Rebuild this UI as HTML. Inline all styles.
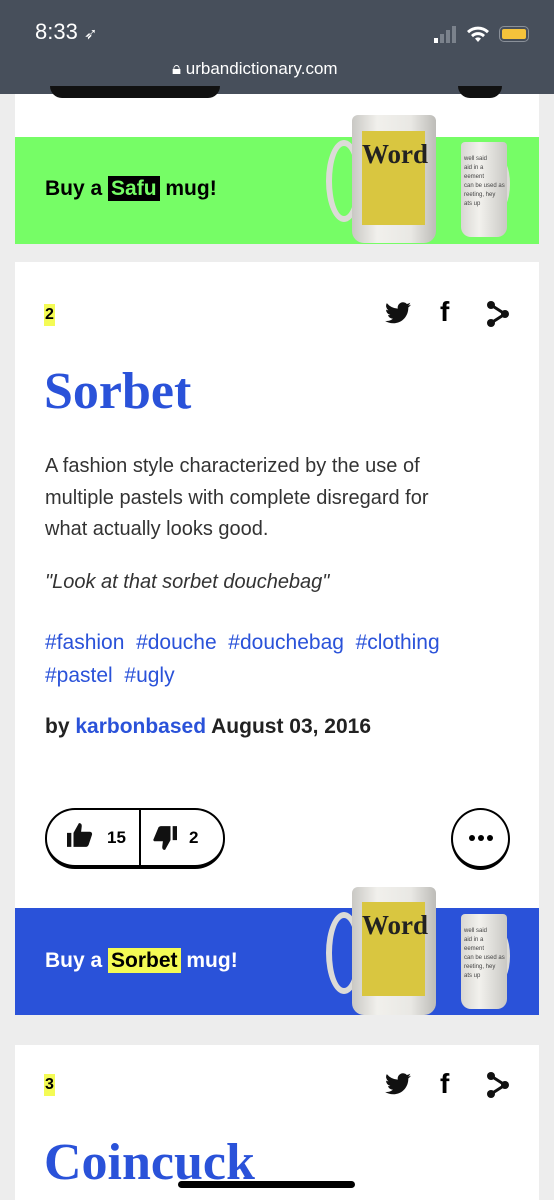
<!DOCTYPE html>
<html><head><meta charset="utf-8"><style>
*{margin:0;padding:0;box-sizing:border-box}
body{width:554px;height:1200px;overflow:hidden;background:#ededed;font-family:"Liberation Sans",sans-serif;position:relative}
.abs{position:absolute}
.bar{left:0;top:0;width:554px;height:94px;background:#474f5b;color:#fff}
.card{background:#fff;left:15px;width:524px}
.ad{left:15px;width:524px;height:107px}
.buy{font-weight:bold;font-size:21px;left:45px}
.hl{padding:1px 3px}
.mug{width:84px;height:128px;background:linear-gradient(90deg,#c9c8c4,#f1f0ec 30%,#e9e8e4 70%,#bdbcb8);border-radius:6px 6px 12px 12px}
.mug2{width:46px;height:95px;background:linear-gradient(90deg,#d8d7d3,#f2f1ed 40%,#c9c8c4);border-radius:4px 4px 10px 10px}
.handle{border:6px solid #dcdbd7;border-radius:50%}
.yel{background:#d9c640;font-family:"Liberation Serif",serif;font-weight:bold;font-size:27px;color:#222;padding-top:8px;text-align:center}
.small{font-size:6px;color:#444;line-height:9px}
.blue{color:#2a52d9}
.txt{color:#333;font-size:20px;left:45px}
.ic{fill:#111}
.dots{display:flex;align-items:center;justify-content:center;gap:3px}
.dots i{width:6px;height:6px;border-radius:50%;background:#000;display:block}
</style></head><body>
<div class="abs bar">
 <div class="abs" style="left:35px;top:19px;font-size:22px">8:33 <span style="font-size:16px">➶</span></div>
 <div class="abs" style="left:434px;top:38px;width:4px;height:5px;background:#fff"></div>
 <div class="abs" style="left:440px;top:34px;width:4px;height:9px;background:#7b828c"></div>
 <div class="abs" style="left:446px;top:30px;width:4px;height:13px;background:#7b828c"></div>
 <div class="abs" style="left:452px;top:26px;width:4px;height:17px;background:#7b828c"></div>
 <svg class="abs" style="left:466px;top:25px" width="24" height="18" viewBox="0 0 24 18"><path d="M12 17l3-3.5a5 5 0 0 0-6 0z M5 10a10 10 0 0 1 14 0l-2 2.2a7 7 0 0 0-10 0z M1 6a16 16 0 0 1 22 0l-2 2.2a13 13 0 0 0-18 0z" fill="#fff"/></svg>
 <div class="abs" style="left:499px;top:26px;width:30px;height:16px;border:1.5px solid #8a9099;border-radius:5px;padding:2px"><div style="width:100%;height:100%;background:#f5c33b;border-radius:2px"></div></div>
 <div class="abs" style="left:172px;top:59px;font-size:17px">🔒︎ urbandictionary.com</div>
</div>
<div class="abs card" style="top:94px;height:149px"></div>
<div class="abs" style="left:50px;top:86px;width:170px;height:12px;background:#111;border-radius:0 0 14px 14px"></div>
<div class="abs" style="left:458px;top:86px;width:44px;height:12px;background:#111;border-radius:0 0 14px 14px"></div>
<div class="abs ad" style="top:137px;background:#76fd66"></div>
<div class="abs buy" style="top:177px;color:#000">Buy a <span class="hl" style="background:#000;color:#76fd66">Safu</span> mug!</div>
<div class="abs handle" style="left:484px;top:155px;width:26px;height:58px"></div>
<div class="abs mug2" style="left:461px;top:142px"></div>
<div class="abs small" style="left:464px;top:155px">well said<br>aid in a<br>eement<br>can be used as<br>reeting, hey<br>ats up</div>
<div class="abs handle" style="left:326px;top:140px;width:36px;height:82px"></div>
<div class="abs mug" style="left:352px;top:115px"></div>
<div class="abs yel" style="left:362px;top:131px;width:63px;height:94px">Word</div>
<div class="abs card" style="top:262px;height:753px"></div>
<div class="abs" style="left:44px;top:304px;background:#f4fb55;font-weight:bold;font-size:16px;padding:2px 1px">2</div>
<svg class="abs" style="left:385px;top:302px" width="26" height="22" viewBox="0 0 24 20"><path class="ic" d="M24 2.4a9.8 9.8 0 0 1-2.8.8A4.9 4.9 0 0 0 23.3.5a9.9 9.9 0 0 1-3.1 1.2A4.9 4.9 0 0 0 11.8 6 14 14 0 0 1 1.7.9a4.9 4.9 0 0 0 1.5 6.6 4.9 4.9 0 0 1-2.2-.6 4.9 4.9 0 0 0 3.9 4.9 4.9 4.9 0 0 1-2.2.1 4.9 4.9 0 0 0 4.6 3.4A9.9 9.9 0 0 1 0 17.3 14 14 0 0 0 7.5 19.5c9.1 0 14-7.5 14-14v-.6A10 10 0 0 0 24 2.4z"/></svg>
<div class="abs" style="left:440px;top:296px;font-size:28px;font-weight:bold">f</div>
<svg class="abs" style="left:486px;top:301px" width="24" height="26" viewBox="0 0 24 26"><path d="M5 4l14 9L5 22" stroke="#111" stroke-width="3" fill="none"/><circle cx="5" cy="4" r="4" class="ic"/><circle cx="19" cy="13" r="4" class="ic"/><circle cx="5" cy="22" r="4" class="ic"/></svg>
<div class="abs blue" style="left:44px;top:362px;font-family:'Liberation Serif',serif;font-weight:bold;font-size:52px">Sorbet</div>
<div class="abs txt" style="top:451px;line-height:31.5px;width:490px;white-space:nowrap">A fashion style characterized by the use of<br>multiple pastels with complete disregard for<br>what actually looks good.</div>
<div class="abs txt" style="top:571px;font-style:italic">"Look at that sorbet douchebag"</div>
<div class="abs txt blue" style="top:626px;line-height:33px;width:490px;font-size:21px;color:#2a52d9">#fashion&nbsp; #douche&nbsp; #douchebag&nbsp; #clothing<br>#pastel&nbsp; #ugly</div>
<div class="abs txt" style="top:715px;font-weight:bold;color:#222;font-size:21px">by <span class="blue">karbonbased</span> August 03, 2016</div>
<div class="abs" style="left:45px;top:808px;width:180px;height:61px;border:2px solid #000;border-bottom-width:4px;border-radius:30px"></div>
<div class="abs" style="left:139px;top:809px;width:2px;height:58px;background:#000"></div>
<svg class="abs" style="left:67px;top:822px" width="26" height="26" viewBox="0 0 24 24"><path class="ic" d="M0 10h4v13H0z M6 10l5-9c2 0 3 1 2.5 4L13 9h8c2 0 2.5 2 2 3l-3 9c-.5 1-1 2-3 2H6z"/></svg>
<div class="abs" style="left:107px;top:828px;font-weight:bold;font-size:17px">15</div>
<svg class="abs" style="left:151px;top:825px" width="26" height="26" viewBox="0 0 24 24" transform="scale(1,-1)"><path class="ic" d="M20 10h4v13h-4z M2 10l5 12c1 1 2 1 3 1h8V10l-5-9c-2 0-3 1-2.5 4L11 9H3z"/></svg>
<div class="abs" style="left:189px;top:828px;font-weight:bold;font-size:17px">2</div>
<div class="abs dots" style="left:451px;top:808px;width:59px;height:62px;border:2px solid #000;border-bottom-width:4px;border-radius:50%"><i></i><i></i><i></i></div>
<div class="abs ad" style="top:908px;background:#2a52d9"></div>
<div class="abs buy" style="top:949px;color:#fff">Buy a <span class="hl" style="background:#f4fb55;color:#000">Sorbet</span> mug!</div>
<div class="abs handle" style="left:484px;top:927px;width:26px;height:58px"></div>
<div class="abs mug2" style="left:461px;top:914px"></div>
<div class="abs small" style="left:464px;top:927px">well said<br>aid in a<br>eement<br>can be used as<br>reeting, hey<br>ats up</div>
<div class="abs handle" style="left:326px;top:912px;width:36px;height:82px"></div>
<div class="abs mug" style="left:352px;top:887px"></div>
<div class="abs yel" style="left:362px;top:902px;width:63px;height:94px">Word</div>
<div class="abs card" style="top:1045px;height:155px"></div>
<div class="abs" style="left:44px;top:1074px;background:#f4fb55;font-weight:bold;font-size:16px;padding:2px 1px">3</div>
<svg class="abs" style="left:385px;top:1073px" width="26" height="22" viewBox="0 0 24 20"><path class="ic" d="M24 2.4a9.8 9.8 0 0 1-2.8.8A4.9 4.9 0 0 0 23.3.5a9.9 9.9 0 0 1-3.1 1.2A4.9 4.9 0 0 0 11.8 6 14 14 0 0 1 1.7.9a4.9 4.9 0 0 0 1.5 6.6 4.9 4.9 0 0 1-2.2-.6 4.9 4.9 0 0 0 3.9 4.9 4.9 4.9 0 0 1-2.2.1 4.9 4.9 0 0 0 4.6 3.4A9.9 9.9 0 0 1 0 17.3 14 14 0 0 0 7.5 19.5c9.1 0 14-7.5 14-14v-.6A10 10 0 0 0 24 2.4z"/></svg>
<div class="abs" style="left:440px;top:1068px;font-size:28px;font-weight:bold">f</div>
<svg class="abs" style="left:486px;top:1072px" width="24" height="26" viewBox="0 0 24 26"><path d="M5 4l14 9L5 22" stroke="#111" stroke-width="3" fill="none"/><circle cx="5" cy="4" r="4" class="ic"/><circle cx="19" cy="13" r="4" class="ic"/><circle cx="5" cy="22" r="4" class="ic"/></svg>
<div class="abs blue" style="left:44px;top:1133px;font-family:'Liberation Serif',serif;font-weight:bold;font-size:52px">Coincuck</div>
<div class="abs" style="left:178px;top:1181px;width:177px;height:7px;background:#000;border-radius:4px"></div>
</body></html>
